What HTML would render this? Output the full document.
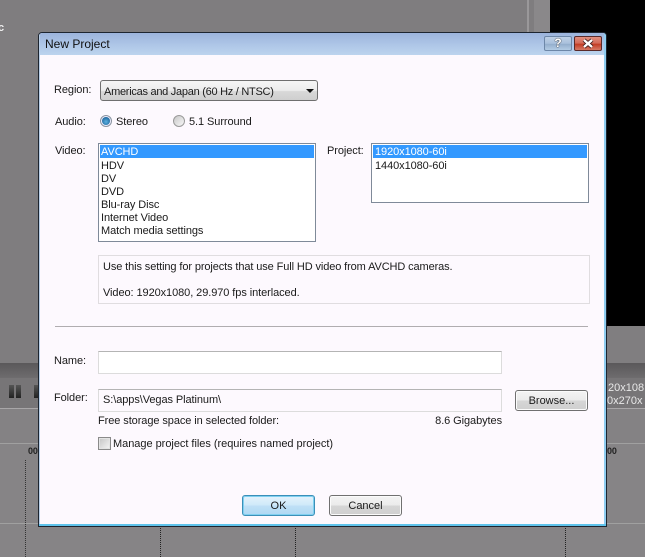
<!DOCTYPE html>
<html><head><meta charset="utf-8"><style>
html,body{margin:0;padding:0;width:645px;height:557px;overflow:hidden;background:#868486}
.a{position:absolute}
.t{position:absolute;font:11px/13px "Liberation Sans",sans-serif;color:#1a1a1a;white-space:nowrap;letter-spacing:-.08px}
.btn{position:absolute;box-sizing:border-box;border:1px solid #707070;border-radius:3px;background:linear-gradient(#f4f4f4 0,#ebebeb 48%,#d6d6d6 52%,#cfcfcf 100%);font:11px/20px "Liberation Sans",sans-serif;color:#1a1a1a;text-align:center;box-shadow:inset 0 0 0 1px #fbfbfb}
.inp{position:absolute;box-sizing:border-box;border:1px solid #dcdcdc;border-top-color:#b4b4b4;background:#fff}
.list{position:absolute;box-sizing:border-box;border:1px solid #7f8a99;background:#fff}
.sel{position:absolute;background:#3399ff;height:13px}
</style></head><body>
<div class="a" style="left:0;top:0;width:645px;height:557px;background:#868486"></div>
<div class="a" style="left:0;top:0;width:550px;height:363px;background:#7f7d7f"></div>
<div class="a" style="left:527px;top:0;width:2px;height:32px;background:#9a989a"></div>
<div class="a" style="left:534px;top:0;width:16px;height:32px;background:#8a888a"></div>
<div class="a" style="left:550px;top:0;width:95px;height:326px;background:#000"></div>
<div class="a" style="left:606px;top:326px;width:39px;height:37px;background:#807e80"></div>
<div class="a" style="left:0;top:363px;width:645px;height:15px;background:linear-gradient(#5a585a,#6e6c6e)"></div>
<div class="a" style="left:0;top:378px;width:645px;height:30px;background:#777577"></div>
<div class="a" style="left:0;top:408px;width:645px;height:1px;background:#a8a6a8"></div>
<div class="a" style="left:0;top:409px;width:645px;height:34px;background:#848284"></div>
<div class="a" style="left:0;top:443px;width:645px;height:1px;background:#a0a0a0"></div>
<div class="a" style="left:0;top:523px;width:645px;height:1px;background:#a0a0a0"></div>
<div class="a" style="left:9px;top:385px;width:5px;height:13px;background:linear-gradient(#555,#222)"></div>
<div class="a" style="left:16px;top:385px;width:5px;height:13px;background:linear-gradient(#555,#222)"></div>
<div class="a" style="left:34px;top:385px;width:4px;height:13px;background:linear-gradient(#555,#222)"></div>
<div class="t" style="left:608px;top:382px;color:#e8e8e8;letter-spacing:0">20x108</div>
<div class="t" style="left:607px;top:395px;color:#e8e8e8;letter-spacing:0">0x270x</div>
<div class="t" style="left:607px;top:445px;color:#222;font-weight:bold;font-size:9px">00</div>
<div class="t" style="left:28px;top:445px;color:#222;font-weight:bold;font-size:9px">00</div>
<div class="a" style="left:25px;top:460px;width:0;height:97px;border-left:1px dotted #333"></div>
<div class="a" style="left:160px;top:526px;width:0;height:31px;border-left:1px dotted #222"></div>
<div class="a" style="left:295px;top:526px;width:0;height:31px;border-left:1px dotted #222"></div>
<div class="a" style="left:565px;top:526px;width:0;height:31px;border-left:1px dotted #222"></div>
<div class="t" style="left:-2px;top:22px;color:#eee;font-weight:bold">c</div>

<!-- dialog -->
<div class="a" style="left:38px;top:32px;width:569px;height:495px;box-sizing:border-box;border:1px solid #1d2530;border-radius:4px 4px 0 0;background:#fdf9fe;overflow:hidden">
  <div class="a" style="left:0;top:0;width:567px;height:22px;background:linear-gradient(#9cb4dc,#b0c8e8 60%,#bcd4ee)"></div>
  <div class="a" style="right:0;top:0;width:2px;height:493px;background:#8fcdf0"></div>
  <div class="a" style="left:0;top:0;width:1px;height:493px;background:#b9cfe8"></div>
  <div class="a" style="left:0;bottom:0;width:567px;height:2px;background:#5fc4ec"></div>
</div>
<div class="t" style="left:45px;top:37px;font-size:12px;line-height:14px;color:#111;letter-spacing:0">New Project</div>
<div class="a" style="left:544px;top:36px;width:28px;height:15px;box-sizing:border-box;border:1px solid #6d87a8;border-radius:2px;background:linear-gradient(#bed0e6 0,#a9c0dc 50%,#94aecd 55%,#b3cbe4);color:#fff;font:bold 12px/13px 'Liberation Sans',sans-serif;text-align:center;text-shadow:0 0 1px #222,0 0 1px #222">?</div>
<div class="a" style="left:574px;top:36px;width:28px;height:15px;box-sizing:border-box;border:1px solid #5a2a2a;border-radius:2px;background:linear-gradient(#e08f80 0,#d46a58 48%,#c23a22 54%,#d67a66)"></div>
<svg class="a" style="left:581px;top:38px" width="14" height="11"><path d="M3 2L11 9M11 2L3 9" stroke="#3a1a1a" stroke-width="4"/><path d="M3 2L11 9M11 2L3 9" stroke="#fff" stroke-width="2.4"/></svg>

<div class="t" style="left:54px;top:84px">Region:</div>
<div class="a" style="left:100px;top:80px;width:218px;height:21px;box-sizing:border-box;border:1px solid #6f6f6f;border-radius:3px;background:linear-gradient(#f6f6f6,#ececec 50%,#d8d8d8 55%,#cfcfcf)"></div>
<div class="t" style="left:104px;top:86px;letter-spacing:-.27px">Americas and Japan (60 Hz / NTSC)</div>
<div class="a" style="left:306px;top:89px;width:0;height:0;border-left:4px solid transparent;border-right:4px solid transparent;border-top:4px solid #111"></div>

<div class="t" style="left:55px;top:116px">Audio:</div>
<div class="a" style="left:100px;top:115px;width:12px;height:12px;box-sizing:border-box;border:1px solid #8a94a0;border-radius:50%;background:#eef"></div>
<div class="a" style="left:102px;top:117px;width:8px;height:8px;border-radius:50%;background:radial-gradient(circle at 50% 60%,#5ab0e0,#0d4f86)"></div>
<div class="t" style="left:116px;top:116px">Stereo</div>
<div class="a" style="left:173px;top:115px;width:12px;height:12px;box-sizing:border-box;border:1px solid #9a9a9a;border-radius:50%;background:linear-gradient(135deg,#c8c8c8,#f8f8f8)"></div>
<div class="t" style="left:189px;top:116px">5.1 Surround</div>

<div class="t" style="left:55px;top:145px">Video:</div>
<div class="list" style="left:98px;top:143px;width:218px;height:99px"></div>
<div class="sel" style="left:100px;top:145px;width:214px"></div>
<div class="t" style="left:101px;top:146px;color:#fff">AVCHD</div>
<div class="t" style="left:101px;top:160px">HDV</div>
<div class="t" style="left:101px;top:173px">DV</div>
<div class="t" style="left:101px;top:186px">DVD</div>
<div class="t" style="left:101px;top:199px">Blu-ray Disc</div>
<div class="t" style="left:101px;top:212px">Internet Video</div>
<div class="t" style="left:101px;top:225px">Match media settings</div>

<div class="t" style="left:327px;top:145px">Project:</div>
<div class="list" style="left:371px;top:143px;width:218px;height:60px"></div>
<div class="sel" style="left:373px;top:145px;width:214px"></div>
<div class="t" style="left:375px;top:146px;color:#fff">1920x1080-60i</div>
<div class="t" style="left:375px;top:160px">1440x1080-60i</div>

<div class="a" style="left:98px;top:255px;width:492px;height:49px;box-sizing:border-box;border:1px solid #e0dde0"></div>
<div class="t" style="left:103px;top:261px;letter-spacing:-.11px">Use this setting for projects that use Full HD video from AVCHD cameras.</div>
<div class="t" style="left:103px;top:287px">Video: 1920x1080, 29.970 fps interlaced.</div>

<div class="a" style="left:55px;top:326px;width:533px;height:1px;background:#b0adb0"></div>

<div class="t" style="left:54px;top:355px">Name:</div>
<div class="inp" style="left:98px;top:351px;width:404px;height:23px"></div>

<div class="t" style="left:54px;top:392px">Folder:</div>
<div class="inp" style="left:98px;top:389px;width:404px;height:23px;background:#fdf9fe"></div>
<div class="t" style="left:103px;top:394px">S:\apps\Vegas Platinum\</div>
<div class="btn" style="left:515px;top:390px;width:73px;height:21px">Browse...</div>

<div class="t" style="left:98px;top:415px">Free storage space in selected folder:</div>
<div class="t" style="right:143px;top:415px">8.6 Gigabytes</div>

<div class="a" style="left:98px;top:437px;width:13px;height:13px;box-sizing:border-box;border:1px solid #8a8a8a;background:linear-gradient(135deg,#c4c4c4,#f6f6f6);box-shadow:inset 0 0 0 1px #e4e4e4"></div>
<div class="t" style="left:113px;top:438px;letter-spacing:-.03px">Manage project files (requires named project)</div>

<div class="btn" style="left:242px;top:495px;width:73px;height:21px;border-color:#3b8fb8;background:linear-gradient(#e4f3fc 0,#cfe9f9 48%,#bfe0f6 52%,#aed8f3);box-shadow:inset 0 0 0 1px #7fd0f0">OK</div>
<div class="btn" style="left:329px;top:495px;width:73px;height:21px">Cancel</div>
</body></html>
